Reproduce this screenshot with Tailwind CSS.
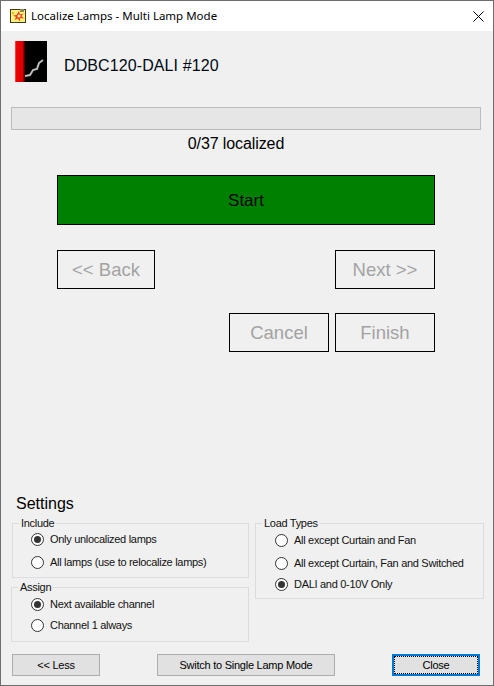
<!DOCTYPE html>
<html lang="en">
  <head>
    <meta charset="UTF-8" />
    <meta name="viewport" content="width=device-width, initial-scale=1.0" />
    <title>Localize Lamps - Multi Lamp Mode</title>
    <script src="https://cdn.jsdelivr.net/npm/@tailwindcss/browser@4"></script>
  </head>
  <body class="bg-[#f0f0f0]">
    <div class="w-[494px] h-[686px] flex flex-col overflow-hidden border border-[#6e6e6e] bg-[#f0f0f0] text-black font-['Liberation_Sans',Arial,sans-serif]">
      <!-- title bar -->
      <div class="h-[30px] shrink-0 bg-white flex items-center pl-[9px] pr-[9px]">
        <svg width="16" height="16" viewBox="0 0 16 16" class="shrink-0">
          <rect x="0.5" y="1.5" width="15" height="13" fill="#fff27a" stroke="#3a3a20" />
          <rect x="10" y="1" width="4" height="3" fill="#8a8a50" />
          <path d="M9 3 L10 6.5 L13.5 5.5 L11.5 8 L14 10.5 L10.5 10 L9.5 13.5 L8 10.5 L4.5 12 L6 9 L3 7.5 L6.5 7 Z" fill="#f0401a" />
          <circle cx="9" cy="8" r="1.6" fill="#ffe9a0" />
          <path d="M2.5 3 L3.2 4.5 L4.8 4.8 L3.4 5.6 L3 7 L2.3 5.6 L1.2 5 L2.4 4.4 Z" fill="#d9a400" />
        </svg>
        <span class="ml-[5px] text-[11.5px] font-['Noto_Sans',sans-serif]">Localize Lamps - Multi Lamp Mode</span>
        <svg width="11" height="11" viewBox="0 0 11 11" class="ml-auto shrink-0">
          <path d="M0.5 0.5 L10.5 10.5 M10.5 0.5 L0.5 10.5" stroke="#000" stroke-width="1" />
        </svg>
      </div>

      <!-- header -->
      <div class="flex items-center h-[41px] mt-[10px] ml-[14px] shrink-0">
        <svg width="32" height="41" viewBox="0 0 32 41" class="shrink-0">
          <defs>
            <linearGradient id="lampRed" x1="0" x2="1" y1="0" y2="0">
              <stop offset="0" stop-color="#ff5a5a" />
              <stop offset="0.15" stop-color="#f00000" />
              <stop offset="0.75" stop-color="#d80000" />
              <stop offset="1" stop-color="#300000" />
            </linearGradient>
          </defs>
          <rect width="32" height="41" fill="#000" />
          <rect width="10" height="41" fill="url(#lampRed)" />
          <path d="M10 35 L15 34 L18 29 L22 28 L24 22 L28 19" fill="none" stroke="#bdbdbd" stroke-width="2" />
        </svg>
        <span class="ml-[17px] pt-[9px] text-[16px] tracking-[0.1px] text-[#000814]">DDBC120-DALI #120</span>
      </div>

      <!-- progress -->
      <div class="h-[23px] mt-[25px] ml-[10px] w-[470px] shrink-0 border border-[#bcbcbc] bg-[#e6e6e6]"></div>
      <div class="w-[450px] ml-[10px] mt-[5px] text-center text-[16px] leading-[18px] tracking-[-0.1px] shrink-0">0/37 localized</div>

      <!-- wizard buttons -->
      <div class="ml-[56px] w-[378px] mt-[22px] shrink-0">
        <button class="block w-full h-[50px] pt-[1px] bg-[#008000] border border-black text-[17px]">Start</button>
        <div class="flex justify-between mt-[25px]">
          <button class="w-[98px] h-[39px] border border-black text-[18.5px] text-[#a3a3a3]">&lt;&lt; Back</button>
          <button class="w-[100px] h-[39px] border border-black text-[18.5px] text-[#a3a3a3]">Next &gt;&gt;</button>
        </div>
        <div class="flex justify-end gap-[6px] mt-[24px]">
          <button class="w-[100px] h-[39px] border border-black text-[18.5px] text-[#a3a3a3]">Cancel</button>
          <button class="w-[100px] h-[39px] border border-black text-[18.5px] text-[#a3a3a3]">Finish</button>
        </div>
      </div>

      <!-- settings -->
      <div class="mt-auto ml-[15px] text-[16px] leading-[18px] shrink-0">Settings</div>
      <div class="flex gap-[6px] ml-[10px] mt-[3px] shrink-0 text-[11px] tracking-[-0.3px] text-[#111] whitespace-nowrap">
        <div class="w-[238px] flex flex-col gap-[2px]">
          <fieldset class="h-[62px] border border-[#dcdcdc] ml-[1px] pl-[18px]">
            <legend class="ml-[-12px] pl-[2px] pr-[2px] leading-[14px]">Include</legend>
            <label class="flex items-center gap-[6px] h-[14px] mt-[2px]">
              <span class="w-[13px] h-[13px] rounded-full border border-[#333] bg-white flex items-center justify-center"><span class="w-[7px] h-[7px] rounded-full bg-[#333]"></span></span>
              Only unlocalized lamps
            </label>
            <label class="flex items-center gap-[6px] h-[14px] mt-[9px]">
              <span class="w-[13px] h-[13px] rounded-full border border-[#333] bg-white"></span>
              All lamps (use to relocalize lamps)
            </label>
          </fieldset>
          <fieldset class="h-[62px] border border-[#dcdcdc] pl-[19px]">
            <legend class="ml-[-13px] pl-[2px] pr-[2px] leading-[14px]">Assign</legend>
            <label class="flex items-center gap-[6px] h-[14px] mt-[3px]">
              <span class="w-[13px] h-[13px] rounded-full border border-[#333] bg-white flex items-center justify-center"><span class="w-[7px] h-[7px] rounded-full bg-[#333]"></span></span>
              Next available channel
            </label>
            <label class="flex items-center gap-[6px] h-[14px] mt-[7px]">
              <span class="w-[13px] h-[13px] rounded-full border border-[#333] bg-white"></span>
              Channel 1 always
            </label>
          </fieldset>
        </div>
        <fieldset class="w-[229px] h-[83px] border border-[#dcdcdc] pl-[19px]">
          <legend class="ml-[-13px] pl-[2px] pr-[2px] leading-[14px]">Load Types</legend>
          <label class="flex items-center gap-[6px] h-[14px] mt-[3px]">
            <span class="w-[13px] h-[13px] rounded-full border border-[#333] bg-white"></span>
            All except Curtain and Fan
          </label>
          <label class="flex items-center gap-[6px] h-[14px] mt-[9px]">
            <span class="w-[13px] h-[13px] rounded-full border border-[#333] bg-white"></span>
            All except Curtain, Fan and Switched
          </label>
          <label class="flex items-center gap-[6px] h-[14px] mt-[7px]">
            <span class="w-[13px] h-[13px] rounded-full border border-[#333] bg-white flex items-center justify-center"><span class="w-[7px] h-[7px] rounded-full bg-[#333]"></span></span>
            DALI and 0-10V Only
          </label>
        </fieldset>
      </div>

      <!-- footer -->
      <div class="flex justify-between ml-[11px] mr-[13px] mt-[12px] mb-[9px] shrink-0 text-[11px] tracking-[-0.25px]">
        <button class="w-[88px] h-[22px] border border-[#adadad] bg-[#e1e1e1]">&lt;&lt; Less</button>
        <button class="w-[178px] h-[22px] border border-[#adadad] bg-[#e1e1e1]">Switch to Single Lamp Mode</button>
        <button class="w-[88px] h-[22px] border-2 border-[#0078d7] bg-[#e1e1e1] outline-1 outline-dotted outline-black outline-offset-[-3px]">Close</button>
      </div>
    </div>
  </body>
</html>
